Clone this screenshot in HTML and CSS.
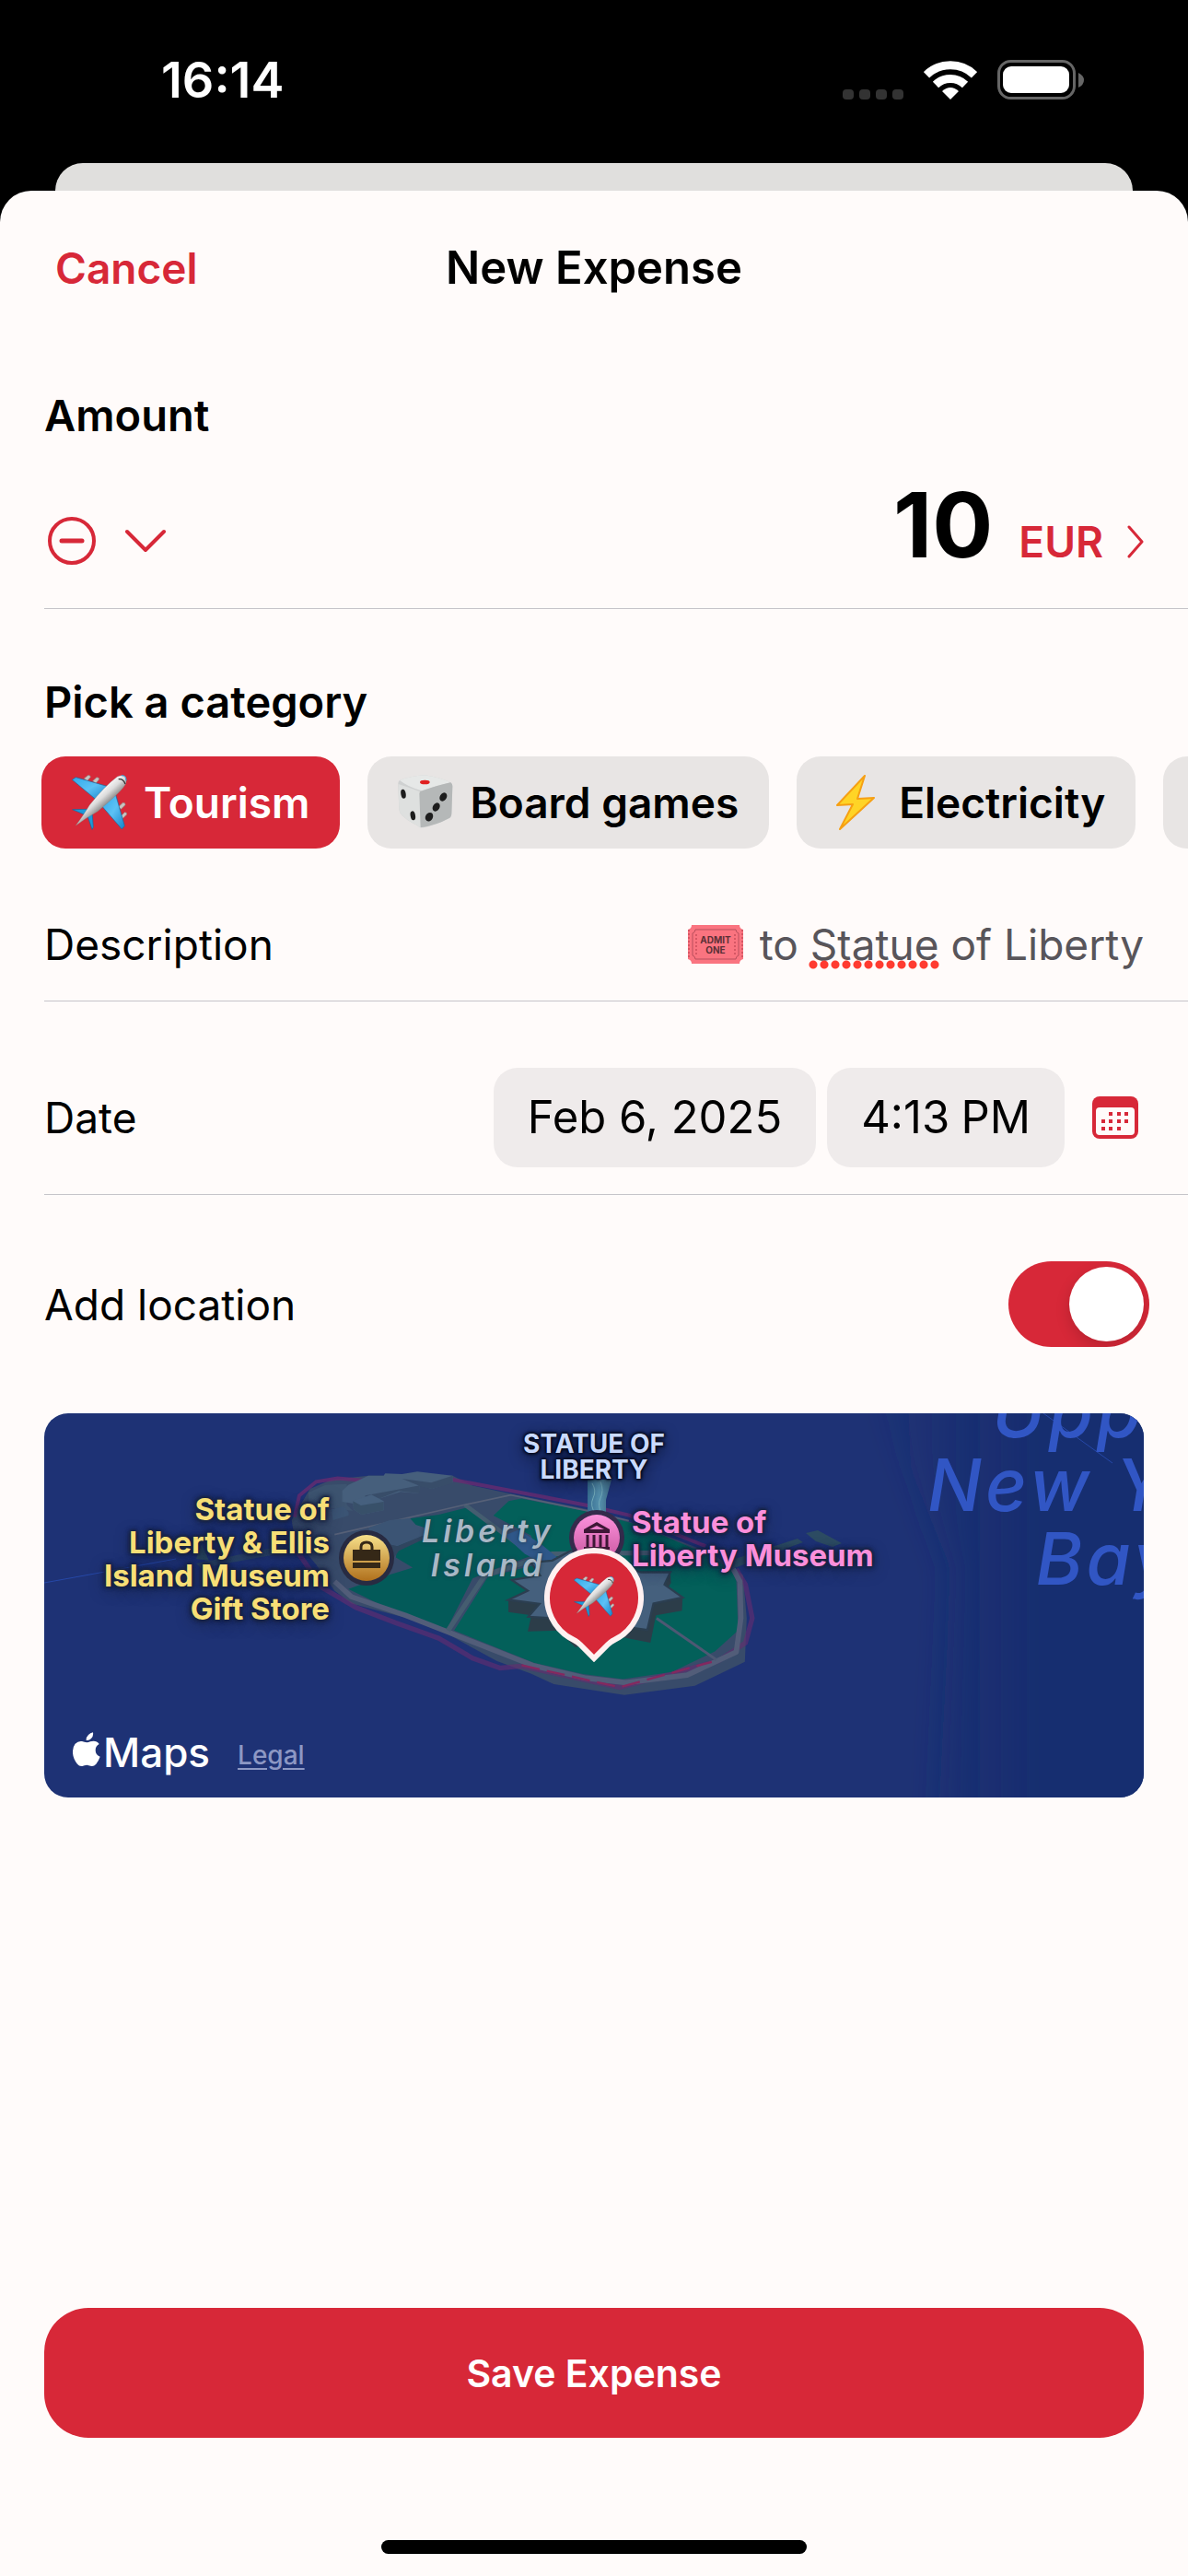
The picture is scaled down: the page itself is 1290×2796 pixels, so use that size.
FILE: index.html
```html
<!DOCTYPE html>
<html lang="en">
<head>
    <meta charset="UTF-8">
    <meta name="viewport" content="width=device-width, initial-scale=1.0">
    <title>New Expense</title>
    <link rel="stylesheet" href="styles.css">
</head>
<body>
    <!-- Shared pictures -->
    <svg width="0" height="0" class="defs" aria-hidden="true">
        <defs>
            <linearGradient id="fuselage" gradientUnits="userSpaceOnUse" x1="75" y1="60" x2="110" y2="100">
                <stop offset="0" stop-color="#fdfdfd"/>
                <stop offset="0.5" stop-color="#dcdcdc"/>
                <stop offset="1" stop-color="#8a8a8a"/>
            </linearGradient>
            <linearGradient id="wing" x1="0" y1="0" x2="1" y2="1">
                <stop offset="0" stop-color="#2fa9ea"/>
                <stop offset="0.5" stop-color="#5cc1f5"/>
                <stop offset="1" stop-color="#1583c8"/>
            </linearGradient>
            <symbol id="plane" viewBox="0 0 180 180">
                <g fill="#c9c3c0" stroke="#8d8885" stroke-width="2">
                    <path d="M40 12 52 2q8-2 9 5L50 20zM68 20 80 9q8-2 9 5L78 28zM152 104l14-13q9-1 8 7l-14 14zM160 134l12-12q8-1 7 7l-13 13z"/>
                </g>
                <path d="M1 16 13 8 118 38 78 80z" fill="url(#wing)" stroke="#14699f" stroke-width="2"/>
                <path d="M142 62 172 166 163 177 98 102z" fill="url(#wing)" stroke="#14699f" stroke-width="2"/>
                <path d="M2 113 52 112 47 132zM50 130 66 120 70 170 66 178z" fill="#1c9ad9" stroke="#14699f" stroke-width="2"/>
                <path d="M13 165Q40 128 58 98 108 36 148 6 162-1 173 4 180 11 176 28 168 50 84 119 44 141 13 165z" fill="url(#fuselage)" stroke="#85807d" stroke-width="1"/>
                <path d="M152 14q16-2 22 16" fill="none" stroke="#333" stroke-width="4"/>
                <path d="M162 2q15-1 15 17" fill="none" stroke="#279fdd" stroke-width="3"/>
            </symbol>
        </defs>
    </svg>

    <div class="status-bar">
        <div class="time">16:14</div>
        <div class="status-icons">
            <svg width="66" height="42" viewBox="0 0 66 42" fill="#333">
                <rect x="0" y="31" width="12" height="11" rx="4"/>
                <rect x="18" y="31" width="12" height="11" rx="4"/>
                <rect x="36" y="31" width="12" height="11" rx="4"/>
                <rect x="54" y="31" width="12" height="11" rx="4"/>
            </svg>
            <svg width="58" height="42" viewBox="0 0 58 42">
                <path d="M3 15.300A37.500 37.500 0 0 1 55 15.300M13 26A23 23 0 0 1 45 26" fill="none" stroke="#fff" stroke-width="9"/>
                <path d="M29 42 20 33Q29 25 38 33z" fill="#fff"/>
            </svg>
            <svg width="94" height="44" viewBox="0 0 94 44">
                <rect x="1.500" y="1.500" width="82" height="40" rx="13" fill="none" stroke="#666" stroke-width="3"/>
                <rect x="6" y="7" width="72" height="29" rx="9" fill="#fff"/>
                <path d="M88 14q6 3 6 8t-6 8z" fill="#666"/>
            </svg>
        </div>
    </div>

    <div class="back-card"></div>

    <main class="sheet">
        <header class="sheet-header">
            <button class="cancel">Cancel</button>
            <h1>New Expense</h1>
        </header>

        <section class="amount">
            <h2><label for="amount">Amount</label></h2>
            <div class="amount-row">
                <div class="sign">
                    <button aria-label="Expense or income">
                        <svg width="52" height="52" viewBox="0 0 52 52" fill="none" stroke="currentColor" stroke-width="4">
                            <circle cx="26" cy="26" r="24"/>
                            <path d="M15 26h22" stroke-width="5" stroke-linecap="round"/>
                        </svg>
                    </button>
                    <button aria-label="More options">
                        <svg width="44" height="26" viewBox="0 0 44 26" fill="none" stroke="currentColor" stroke-width="4" stroke-linecap="round" stroke-linejoin="round">
                            <path d="M2 3 22 23 42 3"/>
                        </svg>
                    </button>
                </div>
                <div class="value">
                    <input type="text" id="amount" value="10" inputmode="decimal">
                    <button class="currency">EUR
                        <svg width="18" height="36" viewBox="0 0 18 36" fill="none" stroke="currentColor" stroke-width="3" stroke-linecap="round" stroke-linejoin="round">
                            <path d="M2 2 16 18 2 34"/>
                        </svg>
                    </button>
                </div>
            </div>
        </section>

        <section class="category">
            <h2>Pick a category</h2>
            <div class="chips">
                <button class="chip active">
                    <svg width="60" height="60"><use href="#plane"/></svg>
                    Tourism
                </button>
                <button class="chip">
                    <svg width="60" height="60" viewBox="0 0 180 180">
                        <path d="M6 18Q40 4 88 1q50 8 84 24 6 4 6 12l-3 88q0 12-9 17-40 22-84 30-12 0-20-8Q30 150 12 130 5 124 4 112L1 34Q0 22 6 18z" fill="#cfd1d1"/>
                        <path d="M6 18Q40 4 88 1q50 8 84 24Q130 34 78 52 34 40 6 18z" fill="#e6e8e7"/>
                        <path d="M1 30Q34 40 70 54q4 4 4 12l2 106q-9-2-14-8Q30 150 12 130 5 124 4 112z" fill="#dee0df"/>
                        <path d="M74 172 70 60q2-7 10-8Q130 34 172 25q6 4 6 12l-3 88q0 12-9 17-40 22-92 30z" fill="#b5b8b8"/>
                        <ellipse cx="88" cy="24" rx="16" ry="7" fill="#e02020"/>
                        <g fill="#1d1d1d">
                            <ellipse cx="18" cy="62" rx="8" ry="15" transform="rotate(-10 18 62)"/>
                            <ellipse cx="49" cy="133" rx="8" ry="15" transform="rotate(-10 49 133)"/>
                            <ellipse cx="148" cy="72" rx="11" ry="15" transform="rotate(30 148 72)"/>
                            <ellipse cx="125" cy="105" rx="11" ry="15" transform="rotate(30 125 105)"/>
                            <ellipse cx="102" cy="137" rx="12" ry="15" transform="rotate(30 102 137)"/>
                        </g>
                    </svg>
                    Board games
                </button>
                <button class="chip">
                    <svg width="60" height="60" viewBox="0 0 60 60">
                        <path d="M41 1 11 33l17-1-14 27 37-34-18 1z" fill="#ffd426" stroke="#f6a014" stroke-width="2" stroke-linejoin="round"/>
                    </svg>
                    Electricity
                </button>
                <button class="chip" aria-label="More categories"></button>
            </div>
        </section>

        <div class="row">
            <label for="description">Description</label>
            <div class="description">
                <svg width="60" height="42" viewBox="0 0 60 42">
                    <path d="M4 0h52q0 4 4 5v32q-4 1-4 5H4q0-4-4-5V5q4-1 4-5z" fill="#fa7480"/>
                    <path d="M8 5h44q0 3 3 4v24q-3 1-3 4H8q0-3-3-4V9q3-1 3-4z" fill="none" stroke="#b94f5c" stroke-width="1"/>
                    <path d="M1 5v32M59 5v32M9 10v22M51 10v22" stroke="#d65764" stroke-width="2" stroke-dasharray="2 2"/>
                    <text x="30" y="20" class="ticket-text">ADMIT</text>
                    <text x="30" y="31" class="ticket-text">ONE</text>
                </svg>
                <input type="text" id="description" value="to Statue of Liberty" spellcheck="false">
                <span class="misspelled"></span>
            </div>
        </div>

        <div class="row">
            <span>Date</span>
            <div class="pickers">
                <button class="pill">Feb 6, 2025</button>
                <button class="pill">4:13&#8197;PM</button>
                <button class="calendar" aria-label="Open calendar">
                    <svg width="50" height="46" viewBox="0 0 50 46">
                        <rect width="50" height="46" rx="8" fill="currentColor"/>
                        <rect x="4" y="12" width="42" height="30" rx="4" fill="#fffbfa"/>
                        <g fill="currentColor">
                            <path d="M18 17h4v4h-4zM27 17h4v4h-4zM35 17h4v4h-4zM10 25h4v4h-4zM18 25h4v4h-4zM27 25h4v4h-4zM35 25h4v4h-4zM10 33h4v4h-4zM18 33h4v4h-4zM27 33h4v4h-4z"/>
                        </g>
                    </svg>
                </button>
            </div>
        </div>

        <div class="row location">
            <label for="location">Add location</label>
            <input type="checkbox" id="location" class="switch" checked>
        </div>

        <div class="map">
            <svg class="terrain" viewBox="0 0 1194 417" preserveAspectRatio="xMidYMid slice">
                <defs>
                    <linearGradient id="depth" x1="0" x2="1">
                        <stop offset="0" stop-color="#172d70" stop-opacity="0"/>
                        <stop offset="0.500" stop-color="#172d70"/>
                        <stop offset="1" stop-color="#172d70"/>
                    </linearGradient>
                    <linearGradient id="copper" x1="0" x2="1">
                        <stop offset="0" stop-color="#366b90"/>
                        <stop offset="0.500" stop-color="#5590ac"/>
                        <stop offset="1" stop-color="#3b6582"/>
                    </linearGradient>
                    <linearGradient id="gold" x1="0" x2="0" y1="0" y2="1">
                        <stop offset="0" stop-color="#f7e08a"/>
                        <stop offset="1" stop-color="#b0701c"/>
                    </linearGradient>
                    <linearGradient id="pink" x1="0" x2="0" y1="0" y2="1">
                        <stop offset="0" stop-color="#fb92dc"/>
                        <stop offset="1" stop-color="#c9569f"/>
                    </linearGradient>
                    <filter id="soft" x="-20%" y="-20%" width="140%" height="140%">
                        <feGaussianBlur stdDeviation="16"/>
                    </filter>
                </defs>
                <rect width="1194" height="417" fill="#1e3275"/>
                <path d="M900-40 1240-40V460H970L985 170z" fill="url(#depth)" filter="url(#soft)"/>
                <path d="M0 184 143 158M1085 0l75 54" stroke="#2648a8" stroke-width="1"/>
                <path d="M165 163 258 144v8L170 168z" fill="#2a4468"/>
                <path d="M165 158l6-16 8 18zM744 170l80-30-6-4-74 24zM827 130l13-3 26 14-10 4-18-6z" fill="#2c4b62"/>

                <g transform="translate(252 36) scale(0.333)">
                    <!-- island base and shoreline -->
                    <path d="M110 138 180 108 300 95 575 95 640 128 780 158 1015 205 1150 245 1400 340 1490 392 1522 420 1534 560 1528 702 1365 780 1135 810 905 775 830 740 720 700 560 612 420 558 245 512 190 470 130 385 60 300 50 240z" fill="#384b6a"/>
                    <path d="M60 230 75 160 130 115 200 104 300 112M575 108 690 130 860 162 1015 192 1150 224 1400 325" fill="none" stroke="#662b70" stroke-width="12" opacity="0.800"/>
                    <path d="M60 330 150 460 260 525 390 575 530 625 640 690 730 722 800 716 1120 785 1440 700 1530 640 1552 560 1530 450 1500 400" fill="none" stroke="#662b70" stroke-width="16" opacity="0.600"/>
                    <!-- lawns -->
                    <path d="M708 225 758 178 800 170 860 182 1015 212 1180 255 1400 350 1488 405 1500 440 1506 600 1430 668 1290 735 1130 758 1000 742 840 705 580 600 690 425 870 380 830 290z" fill="#03605a"/>
                    <path d="M436 235 530 222 620 200 850 350 700 405 640 430 556 595 400 545 235 465 330 430 445 395 390 362 395 325 485 290z" fill="#035a59"/>
                    <path d="M190 440 245 490 420 550 560 605 840 715 1010 755 1140 770 1340 745 1500 670 1515 560 1512 440 1490 400" fill="none" stroke="#525d79" stroke-width="17" stroke-linejoin="round"/>
                    <path d="M800 713 1120 785 1420 702" fill="none" stroke="#84285f" stroke-width="7" stroke-dasharray="60 24"/>
                    <g fill="none" stroke="#455d70">
                        <path d="M560 600 680 420 900 350 1400 345" stroke-width="16"/>
                        <path d="M615 190 830 350" stroke-width="14"/>
                        <path d="M1240 560 1435 695" stroke="#4d5873" stroke-width="9"/>
                        <path d="M190 287 615 190 765 158 1015 210 1150 242" stroke="#566077" stroke-width="5"/>
                    </g>

                    <!-- service buildings -->
                    <path d="M105 150 160 125 230 122 230 190 250 210 105 190z" fill="#3d5470"/>
                    <path d="M215 145 235 125 300 95 350 95 355 88 410 90 460 82 575 95 575 118 508 138 467 128 465 153 405 148 290 185 275 190 215 180z" fill="#465f7c"/>
                    <path d="M410 105 505 118 575 95V120L508 138 467 130V153L400 145 290 188V160L465 128z" fill="#384d69"/>
                    <path d="M250 178 310 157 350 178V208L278 222 252 205z" fill="#46607e"/>
                    <path d="M250 178 276 192 278 222 252 205zM276 192 350 180V208L278 222z" fill="#385069"/>
                    <path d="M180 205 220 195 236 215V225L185 240zM300 265 370 240 436 234 455 255 485 265 480 290 395 325 320 310z" fill="#3b5474"/>
                    <path d="M320 308 395 325 485 288V300L400 340 385 360 330 345z" fill="#30455f"/>
                    <path d="M745 290 790 272 860 315 920 365 900 376 850 372 810 350z" fill="#2f5789"/>

                    <!-- fort -->
                    <path d="M768 435 820 470 757 500V540L832 550 820 603 920 600 975 655 1120 620 1220 640 1238 550 1323 535 1325 492 1266 480 1287 445 1285 410z" fill="#2c3d49"/>
                    <path d="M768 435 860 420 830 378 900 372 960 340 1190 410 1285 410 1266 450 1325 492 1230 512 1210 598 1150 590 1040 620 930 600 900 560 822 555 858 513 757 500 820 470z" fill="#45607d" stroke="#2b3e50" stroke-width="7"/>
                </g>

                <!-- statue -->
                <path d="M590 72h26l-6 22v26h-20z" fill="url(#copper)"/>
                <path d="M595 76q5 8 1 16t3 18M604 74q4 10 0 18t2 18" fill="none" stroke="#71a8b8" stroke-width="1"/>

                <!-- gift store badge -->
                <circle cx="350" cy="157" r="30" fill="#282b42"/>
                <circle cx="350" cy="157" r="25" fill="url(#gold)"/>
                <path d="M335 148h30v12h-30zM335 162h30v6h-30z" fill="#352817"/>
                <path d="M344 148v-3q0-5 6-5t6 5v3" fill="none" stroke="#352817" stroke-width="3"/>

                <!-- museum badge -->
                <circle cx="600" cy="135" r="30" fill="#352b4c"/>
                <circle cx="600" cy="135" r="25" fill="url(#pink)"/>
                <path d="M586 130v-4l14-8 14 8v4zM586 145h28v3h-28z" fill="#3e1736"/>
                <path d="M592 126l8-4 8 4z" fill="#ea7dcb"/>
                <path d="M590 132v14M597 132v14M604 132v14M611 132v14" stroke="#3e1736" stroke-width="3"/>
            </svg>

            <div class="label bay">Upper<br>New York<br>Bay</div>
            <div class="label island">Liberty<br>Island</div>
            <div class="label monument">STATUE OF<br>LIBERTY</div>
            <div class="label store">Statue of<br>Liberty &amp; Ellis<br>Island Museum<br>Gift Store</div>
            <div class="label museum">Statue of<br>Liberty Museum</div>

            <svg class="pin" width="108" height="124" viewBox="0 0 108 124">
                <path d="M54 3A51 51 0 0 1 76 100Q72 102 69 105L54 120 39 105Q36 102 32 100A51 51 0 0 1 54 3z" fill="#d72838" stroke="#fff1f1" stroke-width="6"/>
                <use href="#plane" x="32" y="31" width="44" height="44"/>
            </svg>

            <div class="attribution">
                <span class="maps-logo">
                    <svg width="30" height="38" viewBox="0 0 90 112" fill="#fff">
                        <path d="M66 0Q68 12 60 20 54 27 44 26 43 16 51 8 57 2 66 0zM46 33Q51 33 57 30 76 24 86 38 74 44 74 58 74 73 89 79 84 93 76 103 69 111 61 110 56 108 46 106 38 107 31 110 22 112 15 103 2 88 0 68-1 48 8 37 18 27 30 29 38 31 46 33z"/>
                    </svg>Maps
                </span>
                <a href="#" class="legal">Legal</a>
            </div>
        </div>

        <footer>
            <button class="save">Save Expense</button>
            <div class="home-indicator"></div>
        </footer>
    </main>
</body>
</html>
```
FILE: styles.css
```css
:root {
    --red: #d72838;
    --sheet: #fffbfa;
    --line: #c6c4c9;
    --chip: #e8e5e4;
    --pill: #efebeb;
    --gutter: 48px;
}

* {
    box-sizing: border-box;
}

body {
    display: flex;
    flex-direction: column;
    min-height: 100vh;
    margin: 0;
    background: #000;
    font-family: Inter, 'Liberation Sans', sans-serif;
    font-size: 46px;
    line-height: 60px;
    color: #000;
}

button, input {
    font: inherit;
    color: inherit;
    background: none;
    border: none;
    padding: 0;
    margin: 0;
}

button {
    cursor: pointer;
}

svg {
    display: block;
    flex: none;
}

.defs {
    position: absolute;
}

/* Status bar */
.status-bar {
    display: flex;
    justify-content: space-between;
    align-items: center;
    height: 177px;
    padding: 0 113px 4px 175px;
}

.time {
    font-size: 54px;
    font-weight: 600;
    color: white;
}

.status-icons {
    display: flex;
    align-items: center;
    gap: 22px;
}

/* Sheet */
.back-card {
    height: 60px;
    margin: 0 60px -30px;
    background: #e0dfdd;
    border-radius: 30px 30px 0 0;
}

.sheet {
    flex: 1;
    display: flex;
    flex-direction: column;
    background: var(--sheet);
    border-radius: 34px 34px 0 0;
    overflow: hidden;
}

.sheet-header {
    display: grid;
    grid-template-columns: 1fr auto 1fr;
    align-items: center;
    height: 168px;
    padding: 0 60px;
}

.cancel {
    justify-self: start;
    font-weight: 600;
    color: var(--red);
}

h1, h2 {
    margin: 0;
    font-size: 47px;
    font-weight: 600;
}

h1 {
    font-size: 49px;
}

/* Amount */
.amount {
    margin-left: var(--gutter);
    padding: 46px 48px 32px 0;
    border-bottom: 1px solid var(--line);
}

.amount-row {
    display: flex;
    justify-content: space-between;
    align-items: flex-end;
    margin-top: 31px;
}

.sign {
    display: flex;
    align-items: center;
    gap: 32px;
    height: 82px;
    padding-left: 4px;
    color: var(--red);
}

.value {
    display: flex;
    align-items: baseline;
    gap: 28px;
}

#amount {
    field-sizing: content;
    font-size: 98px;
    font-weight: 700;
    line-height: 116px;
    text-align: right;
}

.currency {
    display: flex;
    align-items: center;
    gap: 26px;
    font-weight: 600;
    color: var(--red);
}

/* Category */
.category {
    padding-top: 71px;
}

.category h2 {
    padding-left: var(--gutter);
}

.chips {
    display: flex;
    gap: 30px;
    margin-top: 29px;
    padding-left: 45px;
    overflow: hidden;
}

.chip {
    display: flex;
    flex: none;
    align-items: center;
    gap: 18px;
    min-width: 300px;
    height: 100px;
    padding: 0 33px;
    border-radius: 26px;
    background: var(--chip);
    font-weight: 600;
}

.chip.active {
    background: var(--red);
    color: white;
}

/* Form rows */
.row {
    display: flex;
    justify-content: space-between;
    align-items: center;
    margin-left: var(--gutter);
    padding: 72px 48px 29px 0;
    border-bottom: 1px solid var(--line);
}

.description {
    position: relative;
    display: flex;
    align-items: center;
    gap: 18px;
    color: #58555a;
}

#description {
    field-sizing: content;
    height: 64px;
    text-align: right;
}

.ticket-text {
    font-size: 10px;
    font-weight: 700;
    text-anchor: middle;
    fill: #5c3037;
}

.misspelled {
    position: absolute;
    right: 221px;
    top: 49px;
    width: 144px;
    height: 10px;
    background: radial-gradient(circle, #ff3b30 4px, transparent 5px) 0 0 / 12px 10px;
}

.pickers {
    display: flex;
    align-items: center;
    gap: 12px;
}

.pill {
    height: 108px;
    padding: 0 37px;
    border-radius: 26px;
    background: var(--pill);
    font-size: 49px;
}

.calendar {
    margin: 0 6px 0 18px;
    color: var(--red);
}

.location {
    padding-right: 42px;
    padding-bottom: 0;
    border-bottom: none;
}

.switch {
    appearance: none;
    display: flex;
    align-items: center;
    justify-content: flex-end;
    width: 153px;
    height: 93px;
    padding: 6px;
    border-radius: 47px;
    background: var(--red);
    overflow: hidden;
    cursor: pointer;
}

.switch::before {
    content: '';
    width: 81px;
    height: 81px;
    border-radius: 50%;
    background: white;
    box-shadow: 0 6px 16px rgba(0, 0, 0, 0.15);
}

.switch:not(:checked) {
    justify-content: flex-start;
    background: var(--chip);
}

/* Map */
.map {
    position: relative;
    height: 417px;
    margin: 72px var(--gutter) 0;
    border-radius: 26px;
    overflow: hidden;
}

.terrain {
    width: 100%;
    height: 100%;
}

.label {
    position: absolute;
    font-size: 33px;
    font-weight: 700;
    line-height: 36px;
    white-space: nowrap;
    text-shadow: 0 0 3px #1a2440, 0 0 3px #1a2440, 0 0 5px #1a2440, 0 0 5px #1a2440, 0 0 6px #1a2440, 0 4px 16px #1a2440;
}

.store {
    right: 884px;
    top: 86px;
    text-align: right;
    color: #f7df76;
}

.museum {
    left: 638px;
    top: 100px;
    color: #fb8fdb;
}

.monument {
    left: 597px;
    top: 19px;
    transform: translateX(-50%);
    font-size: 28px;
    line-height: 28px;
    text-align: center;
    color: #c9daff;
    text-shadow: 0 0 3px #060a18, 0 0 3px #060a18, 0 0 4px #060a18, 0 0 4px #060a18, 0 4px 16px #060a18;
}

.island {
    left: 482px;
    top: 109px;
    transform: translateX(-50%);
    font-size: 34px;
    line-height: 37px;
    font-weight: 600;
    font-style: italic;
    letter-spacing: 4px;
    text-align: center;
    color: #a9b8c6;
    text-shadow: 0 0 4px #1c3a4c;
}

.bay {
    left: 1154px;
    top: -42px;
    transform: translateX(-50%);
    font-size: 78px;
    line-height: 80px;
    font-weight: 500;
    font-style: italic;
    letter-spacing: 4px;
    text-align: center;
    color: #3156c4;
    text-shadow: none;
}

.pin {
    position: absolute;
    left: 50%;
    top: 146px;
    margin-left: -54px;
}

.attribution {
    position: absolute;
    left: 31px;
    bottom: 16px;
    display: flex;
    align-items: center;
    gap: 30px;
}

.maps-logo {
    display: flex;
    align-items: center;
    gap: 3px;
    font-size: 44px;
    font-weight: 500;
    color: white;
}

.maps-logo svg {
    margin-bottom: 6px;
}

.legal {
    padding-top: 6px;
    font-size: 28px;
    font-weight: 500;
    text-underline-offset: 4px;
    color: #8d98c4;
}

/* Footer */
footer {
    margin-top: auto;
    padding: 0 var(--gutter) 24px;
}

.save {
    display: block;
    width: 100%;
    height: 141px;
    border-radius: 48px;
    background: var(--red);
    font-size: 41px;
    font-weight: 600;
    color: white;
}

.home-indicator {
    width: 462px;
    height: 15px;
    margin: 111px auto 0;
    border-radius: 8px;
    background: #000;
}
```
